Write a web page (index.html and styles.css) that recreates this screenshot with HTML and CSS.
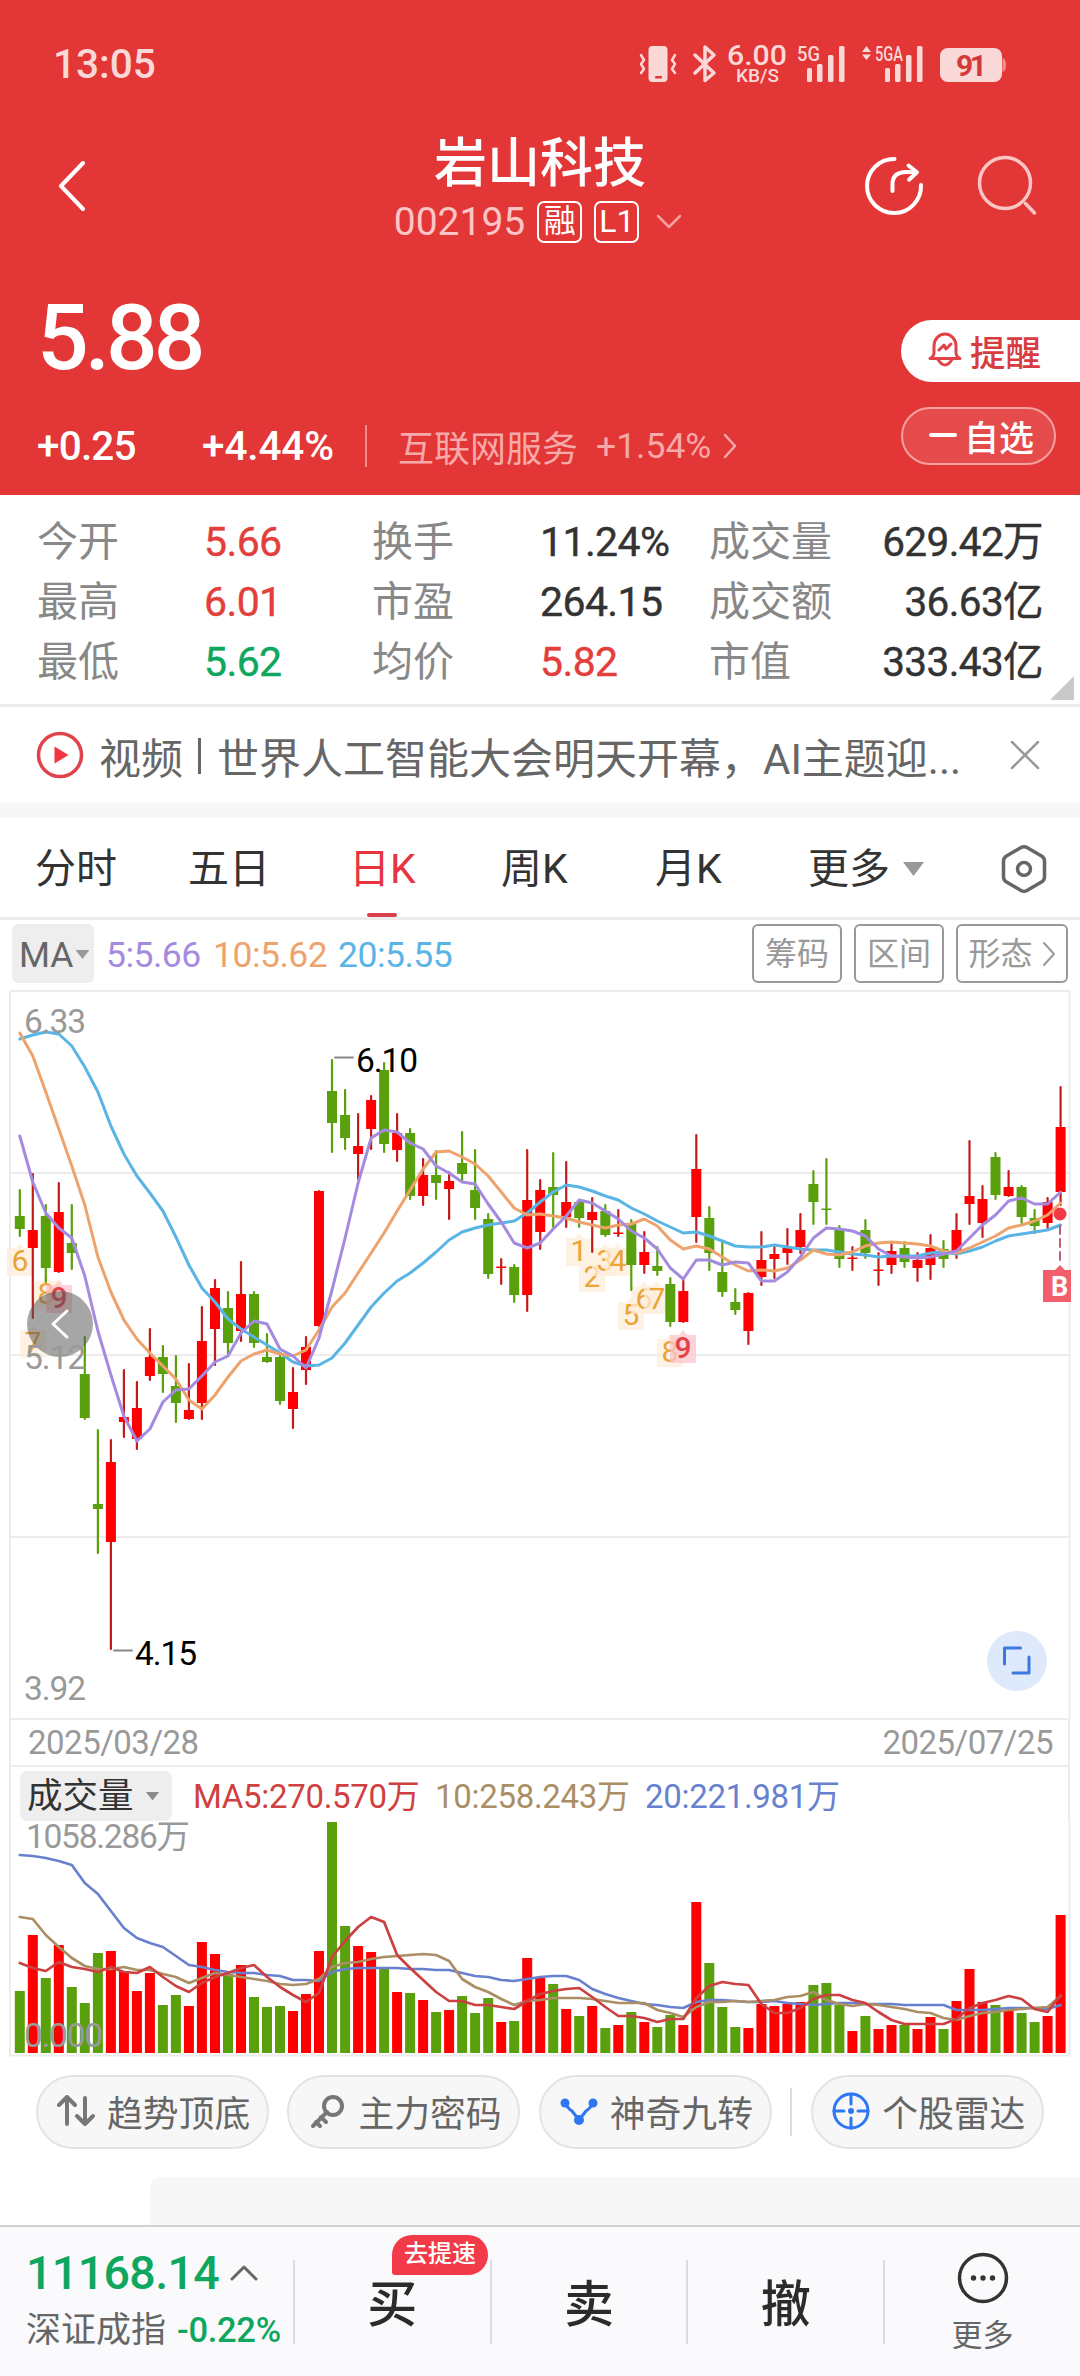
FILE: index.html
```html
<!DOCTYPE html>
<html lang="zh-CN">
<head>
<meta charset="utf-8">
<title>岩山科技 002195</title>
<link rel="stylesheet" href="styles.css">
</head>
<body>
<header class="hero">
  <div class="status">
    <span class="clock">13:05</span>
    <svg class="status-icons" width="380" height="50" viewBox="630 40 380 50">
      <g class="soft-fill">
        <rect x="648.500" y="46" width="19" height="36" rx="4"/>
        <rect x="807" y="68" width="5" height="14" rx="1.500"/><rect x="817" y="64" width="5.500" height="18" rx="1.500"/><rect x="828" y="55" width="5.500" height="27" rx="1.500"/><rect x="839" y="46" width="5.500" height="36" rx="1.500"/>
        <rect x="885" y="68" width="5" height="14" rx="1.500"/><rect x="895" y="64" width="5.500" height="18" rx="1.500"/><rect x="906" y="55" width="5.500" height="27" rx="1.500"/><rect x="917" y="46" width="5.500" height="36" rx="1.500"/>
        <path d="M862 52l4.500-6 4.500 6zM862 54.500h9l-4.500 5.500z"/>
        <rect x="940" y="48" width="62" height="34" rx="8"/>
        <path class="nub" d="M1002.500 58q3.500 1 3.500 7t-3.500 7z"/>
      </g>
      <rect class="red-fill" x="655" y="76" width="7" height="2.500" rx="1"/>
      <path class="soft-line" d="M641 55l3 5-3 4 3 5-3 4M675 55l-3 5 3 4-3 5 3 4" stroke-width="2.500"/>
      <path class="soft-line" d="M695 55l19 18-9 7.500V47l9 8-19 18" stroke-width="3.500"/>
      <text class="st big" x="727" y="65" font-size="28" textLength="60" lengthAdjust="spacingAndGlyphs">6.00</text>
      <text class="st" x="736" y="81.500" font-size="18.500" textLength="43" lengthAdjust="spacingAndGlyphs">KB/S</text>
      <text class="st" x="797" y="61" font-size="20" textLength="23" lengthAdjust="spacingAndGlyphs">5G</text>
      <text class="st" x="875" y="61" font-size="20" textLength="28" lengthAdjust="spacingAndGlyphs">5GA</text>
      <text class="batt" x="956" y="75.500" font-size="30" textLength="31">91</text>
    </svg>
  </div>
  <div class="titlebar">
    <svg class="back" width="30" height="50" viewBox="0 0 30 50"><path d="M26 2L4 25l22 23"/></svg>
    <div class="title">
      <h1>岩山科技</h1>
      <div class="code"><span>002195</span><i class="badge">融</i><i class="badge">L1</i><svg width="26" height="16" viewBox="0 0 26 16"><path d="M2 2l11 11L24 2"/></svg></div>
    </div>
    <svg class="actions" width="180" height="64" viewBox="860 154 180 64">
      <path class="share" d="M894.500 159A27 27 0 1 0 921 185M892.500 191v-7q0-12 14-12h9M908.500 165.500l8.500 6.700-8 7.500"/>
      <g class="search"><circle cx="1005" cy="183" r="25.500"/><path d="M1025.500 203.500l9 9.500"/></g>
    </svg>
  </div>
  <div class="quote">
    <div>
      <div class="price">5.88</div>
      <div class="change"><span class="diff">+0.25</span><span class="pct">+4.44%</span><i class="sep"></i><span class="sector">互联网服务</span><span class="sector-pct">+1.54%</span><svg width="14" height="26" viewBox="0 0 14 26"><path d="M2 2l10 11L2 24"/></svg></div>
    </div>
    <div class="side">
      <div class="remind"><svg width="34" height="36" viewBox="0 0 34 36"><path d="M2 26.500h30q-4-2-4-6V14a11 12 0 0 0-22 0v6.500q0 4-4 6zM10 27.500q7 11 14 0M11 18l5-5 2 4 5-5"/></svg>提醒</div>
      <div class="fav"><i></i>自选</div>
    </div>
  </div>
</header>

<section class="stats">
  <span>今开</span><b class="up">5.66</b><span>换手</span><b>11.24%</b><span>成交量</span><b class="r">629.42万</b>
  <span>最高</span><b class="up">6.01</b><span>市盈</span><b>264.15</b><span>成交额</span><b class="r">36.63亿</b>
  <span>最低</span><b class="down">5.62</b><span>均价</span><b class="up">5.82</b><span>市值</span><b class="r">333.43亿</b>
  <i class="corner"></i>
</section>

<section class="news">
  <svg width="48" height="48" viewBox="0 0 48 48"><circle cx="24" cy="24" r="21.500"/><path d="M18.500 15.500v17l14-8.500z"/></svg>
  <p><span>视频</span><i></i><span>世界人工智能大会明天开幕，AI主题迎...</span></p>
  <svg class="close" width="30" height="30" viewBox="0 0 30 30"><path d="M2 2l26 26M28 2L2 28"/></svg>
</section>

<nav class="tabs">
  <span>分时</span><span>五日</span><span class="on">日K</span><span>周K</span><span>月K</span>
  <span class="more">更多<i class="tri"></i></span>
  <svg width="46" height="50" viewBox="0 0 46 50"><path d="M20 3.500q3-1.700 6 0l14.500 8.500q3 1.700 3 5v16q0 3.300-3 5L26 46.500q-3 1.700-6 0L5.500 38q-3-1.700-3-5V17q0-3.300 3-5z"/><circle cx="23" cy="25" r="6.500"/></svg>
</nav>

<section class="ma-row">
  <span class="ma">MA<i class="tri"></i></span>
  <span class="m5">5:5.66</span><span class="m10">10:5.62</span><span class="m20">20:5.55</span>
  <div class="tools"><span>筹码</span><span>区间</span><span class="wide">形态<svg width="14" height="26" viewBox="0 0 14 26"><path d="M2 2l10 11L2 24"/></svg></span></div>
</section>

<svg id="kline" class="chart" width="1080" height="728" viewBox="0 990 1080 728"></svg>
<div class="dates"><span>2025/03/28</span><span>2025/07/25</span></div>
<div class="vol-row"><span class="vol">成交量<i class="tri"></i></span><span class="v5">MA5:270.570万</span><span class="v10">10:258.243万</span><span class="v20">20:221.981万</span></div>
<svg id="volume" class="chart" width="1080" height="236" viewBox="0 1821 1080 236"></svg>

<section class="pills">
  <span><svg width="38" height="32" viewBox="0 0 38 32"><path class="gl" d="M10 29V3M2 10l8-8 8 8M28 3v26M20 21l8 8 8-8"/></svg>趋势顶底</span>
  <span><svg width="38" height="36" viewBox="0 0 38 36"><circle class="gl" cx="25" cy="13" r="9"/><path class="gl" d="M19 19L5 33M8 29l4 4M13 24l5 5"/></svg>主力密码</span>
  <span><svg width="38" height="32" viewBox="0 0 38 32"><path class="bl" stroke-width="4" d="M5 7q2 6 7 9l7 9 7-9q5-3 7-9"/><g class="bf"><circle cx="5" cy="8" r="4.500"/><circle cx="33" cy="8" r="4.500"/><circle cx="19" cy="25" r="5"/></g></svg>神奇九转</span>
  <i></i>
  <span><svg width="38" height="38" viewBox="0 0 38 38"><circle class="bl" cx="19" cy="19" r="17"/><path class="bl" d="M19 2v10M19 26v10M2 19h10M26 19h10"/><circle class="bf" cx="19" cy="19" r="3"/></svg>个股雷达</span>
</section>
<div class="card"></div>

<footer class="bar">
  <div class="index">
    <div class="val">11168.14<svg width="28" height="18" viewBox="0 0 28 18"><path d="M2 15L14 3l12 12"/></svg></div>
    <div class="name">深证成指<b>-0.22%</b></div>
  </div>
  <div class="act">买<em>去提速</em></div>
  <div class="act">卖</div>
  <div class="act">撤</div>
  <div class="act dots"><svg width="52" height="52" viewBox="0 0 52 52"><circle class="ring" cx="26" cy="26" r="23.500"/><circle cx="16.500" cy="26" r="2.700"/><circle cx="26" cy="26" r="2.700"/><circle cx="35.500" cy="26" r="2.700"/></svg>更多</div>
</footer>
<script src="chart.js"></script>
</body>
</html>
```
FILE: styles.css
```css
* { box-sizing: border-box; }
body { margin: 0; width: 1080px; height: 2376px; overflow: hidden; background: #fff; color: #333; font-family: Roboto, "Noto Sans CJK SC", sans-serif; display: flex; flex-direction: column; }
i, em { font-style: normal; }
svg { flex: none; display: block; fill: none; stroke-linecap: round; stroke-linejoin: round; }
span, p, b, div { white-space: nowrap; }

.hero { flex: none; height: 495px; background: #e33636; color: #fff; }
.status { height: 126px; display: flex; justify-content: space-between; padding: 40px 70px 0 53px; }
.clock { font-size: 40.500px; font-weight: 500; line-height: 48px; color: #fbd8d8; }
.soft-fill { fill: #fbd8d8; }
.nub { fill: #ef8f8f; }
.red-fill { fill: #e33636; }
.soft-line { stroke: #fbd8d8; }
.st { fill: #fbd8d8; font-weight: 500; }
.batt { fill: #d23a3a; font-weight: 700; }
.titlebar { height: 130px; display: flex; padding-left: 57px; }
.back { margin-top: 35px; stroke: #fff; stroke-width: 4; }
.title { width: 560px; margin-left: 173px; display: flex; flex-direction: column; align-items: center; }
h1 { margin: 2px 0 0; font-size: 53px; font-weight: 500; line-height: 72px; }
.code { display: flex; align-items: center; height: 42px; margin: 1px 4px 0 0; font-size: 39px; color: #fbc5c5; }
.code span { letter-spacing: 0; margin-right: 12px; }
.badge { width: 45px; height: 42px; border: 2.500px solid #fff; border-radius: 7px; color: #fff; font-size: 32px; line-height: 37px; text-align: center; margin-right: 12px; }
.code svg { stroke: #f4a0a0; stroke-width: 2.500; margin-left: 5px; }
.actions { margin: 28px 0 0 40px; }
.share { stroke: #fff; stroke-width: 4; }
.search { stroke: #fbc5c5; stroke-width: 3.500; }
.quote { display: flex; justify-content: space-between; padding-left: 37px; }
.price { margin-top: 32px; font-size: 91px; font-weight: 500; line-height: 100px; letter-spacing: -4px; }
.change { display: flex; align-items: center; height: 44px; margin-top: 36px; font-size: 40.500px; font-weight: 500; }
.diff { width: 165px; letter-spacing: -.8px; }
.pct { width: 163px; letter-spacing: -.1px; }
.sep { width: 2px; height: 42px; background: #ee8a8a; }
.sector { margin-left: 31px; font-size: 36px; font-weight: 400; color: #f6a9a9; }
.sector-pct { margin-left: 18px; width: 127px; font-size: 35.500px; font-weight: 400; color: #f6a9a9; }
.change svg { stroke: #f6a9a9; stroke-width: 2.500; }
.side { width: 179px; padding-top: 64px; }
.remind { height: 62px; border-radius: 31px 0 0 31px; background: #fff; color: #d83c3f; display: flex; align-items: center; padding: 0 0 2px 27px; gap: 8px; font-size: 35.500px; font-weight: 500; }
.remind svg { stroke: #e04347; stroke-width: 3; }
.fav { width: 155px; height: 58px; margin-top: 25px; border: 2px solid #f4a0a0; border-radius: 29px; background: #e64b4b; display: flex; align-items: center; padding: 0 0 2px 26px; gap: 7px; font-size: 35px; font-weight: 500; }
.fav i { width: 28px; height: 3.500px; background: #fff; border-radius: 2px; }

.stats { flex: none; position: relative; height: 212px; padding: 17px 37px 0 37px; border-bottom: 3px solid #ececec; display: grid; grid-template-columns: 167px 168px 168px 169px 140px 1fr; grid-auto-rows: 60px; align-items: center; font-size: 41px; line-height: 60px; color: #888; }
.stats b { font-weight: 400; letter-spacing: -.6px; color: #333; -webkit-text-stroke: .4px currentColor; }
.stats .up { color: #e23f3c; }
.stats .down { color: #0fa65f; }
.stats .r { text-align: right; font-size: 40.500px; }
.corner { position: absolute; right: 6px; bottom: 4px; width: 24px; height: 24px; background: #c9c9c9; clip-path: polygon(100% 0, 100% 100%, 0 100%); }

.news { flex: none; height: 111px; border-bottom: 15px solid #f7f7f7; display: flex; align-items: center; padding: 0 40px 0 36px; color: #666; font-size: 42px; }
.news p { margin: 1px 0 0 15px; display: flex; align-items: center; width: 911px; }
.news p i { width: 3px; height: 36px; background: #666; margin: 0 16px 0 15px; }
.news circle { stroke: #e0434c; stroke-width: 3.500; }
.news svg:first-child path { fill: #f03440; }
.news .close { stroke: #999; stroke-width: 2.500; }

.tabs { flex: none; height: 102px; border-bottom: 3px solid #ececec; display: grid; grid-template-columns: 153px 161px 152px 154px 153px 193px 1fr; align-items: center; padding: 3px 0 0 35px; font-size: 41px; line-height: 96px; color: #333; }
.tabs .on { color: #e8343f; position: relative; }
.on::after { content: ""; position: absolute; left: 18px; bottom: 0; width: 30px; height: 4px; border-radius: 2px; background: #d8404a; }
.tri { display: inline-block; background: #999; clip-path: polygon(0 0, 100% 0, 50% 100%); }
.more { display: flex; align-items: center; gap: 13px; }
.more .tri { width: 21px; height: 14px; }
.tabs svg { stroke: #666; stroke-width: 3.500; }

.ma-row { flex: none; height: 70px; padding: 0 12px; display: flex; align-items: center; font-size: 35.500px; line-height: 56px; padding-bottom: 3px; }
.ma { width: 82px; height: 59px; border-radius: 6px; background: #eee; color: #666; display: flex; align-items: center; padding: 2px 0 0 7px; margin-right: 12px; }
.ma .tri { width: 14px; height: 9px; margin-left: 2px; }
.m5, .m10, .m20 { letter-spacing: -.5px; padding-top: 2px; }
.m5 { width: 107px; color: #a48be0; }
.m10 { width: 125px; color: #eda36b; }
.m20 { color: #5ab4e5; }
.tools { margin-left: auto; display: flex; gap: 12px; font-size: 32px; color: #999; }
.tools span { width: 90px; height: 59px; border: 2px solid #999; border-radius: 6px; display: flex; align-items: center; justify-content: center; }
.tools .wide { width: 112px; gap: 9px; }
.tools svg { stroke: #999; stroke-width: 2; }

.chart { overflow: visible; }
.dates, .vol-row { flex: none; width: 1061px; margin-left: 9px; border: solid #ececec; border-width: 2px; border-bottom: 0; display: flex; align-items: center; }
.dates { height: 47px; justify-content: space-between; padding: 0 15px 0 17px; font-size: 33px; color: #999; letter-spacing: -.5px; }
.vol-row { height: 56px; padding: 4px 0 0 9px; font-size: 33px; line-height: 50px; }
.vol { width: 152px; height: 50px; border-radius: 7px; background: #eee; font-size: 35.500px; padding-left: 7px; display: flex; align-items: center; margin-right: 21px; }
.vol .tri { width: 14px; height: 9px; margin-left: 12px; background: #8a8a8a; }
.v5, .v10, .v20 { letter-spacing: -.3px; padding-top: 1px; }
.v5 { width: 242px; color: #cf4040; }
.v10 { width: 210px; color: #ab8e64; }
.v20 { color: #6881cf; }

.pills { flex: none; height: 92px; padding: 18px 36px 0; display: flex; align-items: flex-start; }
.pills span { width: 233px; height: 74px; margin-right: 18.500px; border: 2px solid #e3e3e3; border-radius: 37px; background: #f7f7f7; color: #666; font-size: 35.800px; display: flex; align-items: center; padding: 0 0 2px 19px; gap: 12px; }
.pills > i { width: 2px; height: 48px; margin: 13px 19px 0 0; background: #ddd; }
.pills span:last-child { margin: 0; }
.gl { stroke: #777; stroke-width: 4; }
.bl { stroke: #2f77f2; stroke-width: 3; }
.bf { fill: #2f77f2; }
.card { flex: none; margin: 28px 0 0 150px; height: 48px; border-radius: 10px 0 0 0; background: #f7f7f7; }

.bar { flex: none; height: 151px; border-top: 2px solid #d2d2d4; background: #fafafc; display: flex; padding-top: 33px; }
.index { width: 294px; padding-left: 26px; }
.val { height: 56px; margin-top: -15px; display: flex; align-items: center; gap: 11px; font-size: 46.500px; font-weight: 500; line-height: 56px; letter-spacing: -.6px; color: #0fa65f; }
.val svg { stroke: #666; stroke-width: 3; }
.name { margin-top: 4px; font-size: 35px; line-height: 50px; color: #666; }
.name b { font-weight: 500; font-size: 34.500px; letter-spacing: -.3px; color: #0fa65f; margin-left: 11px; }
.act { position: relative; width: 197.500px; height: 84px; border-left: 2px solid #dcdce0; font-size: 50px; font-weight: 500; line-height: 90px; text-align: center; color: #2b2b2b; }
.act em { position: absolute; left: 97px; top: -25px; width: 96px; height: 40px; border-radius: 20px 20px 20px 3px; background: #f23a48; color: #fff; font-size: 24px; line-height: 38px; }
.dots { font-size: 31px; font-weight: 400; line-height: 40px; color: #666; }
.dots svg { margin: -8px auto 12px; fill: #333; }
.dots .ring { fill: none; stroke: #333; stroke-width: 3.500; }

.axis { fill: #999; font-size: 33.500px; }
.mark { fill: #000; font-size: 33.500px; }
.grid { stroke: #ececec; stroke-width: 2; }
.sig { fill: #eaa437; font-size: 30px; text-anchor: middle; }
.sig.nine { fill: #e0434c; font-weight: 500; }
```
FILE: chart.js
```javascript
const X0 = 19.8, STEP = 13.01, UP = '#fe0000', DOWN = '#5aa00c';
const x = i => X0 + i * STEP;

// Each candle: direction, high, body top, body bottom, low, volume top
const candles = `G 1190 1216 1229 1236 1991|R 1174 1230 1248 1318 1935|G 1205 1216 1268 1282 1978|R 1183 1212 1272 1272 1945|G 1205 1243 1253 1269 1987|G 1337 1374 1418 1419 2003|G 1430 1504 1509 1553 1953|R 1440 1462 1542 1649 1951|R 1370 1417 1422 1437 1971|R 1382 1408 1439 1449 1991|R 1329 1357 1376 1380 1973|G 1346 1357 1374 1392 2005|G 1356 1386 1403 1422 1995|R 1364 1410 1419 1419 2006|R 1307 1341 1403 1419 1942|R 1280 1288 1329 1365 1954|G 1292 1308 1343 1354 1974|R 1262 1294 1331 1341 1965|G 1292 1294 1343 1347 1997|G 1334 1357 1362 1362 2007|G 1356 1357 1401 1404 2006|R 1368 1392 1409 1428 2011|R 1337 1347 1370 1384 1994|R 1191 1191 1326 1326 1951|G 1060 1091 1123 1152 1822|G 1090 1115 1138 1149 1926|R 1114 1146 1154 1179 1946|R 1096 1100 1129 1149 1952|G 1063 1070 1144 1152 1969|R 1114 1133 1150 1161 1992|G 1129 1133 1196 1199 1993|R 1159 1175 1196 1205 2000|G 1151 1175 1183 1199 2012|R 1172 1181 1189 1219 2010|G 1132 1163 1174 1181 1996|G 1150 1190 1208 1219 2013|G 1214 1219 1274 1278 1998|R 1259 1266.500 1268 1284 2022|G 1265 1267 1295 1302 2021|R 1150 1200 1295 1311 1958|R 1180 1190 1232 1249 1978|G 1153 1187 1195 1227 1984|R 1162 1202 1217 1227 2009|G 1201 1202 1218 1227 2016|R 1198 1212 1220 1252 2006|G 1205 1211 1235 1236 2028|R 1210 1232.500 1234 1236 2025|G 1220 1223 1265 1290 2012|R 1232 1252 1265 1273 2022|G 1247 1266 1271 1275 2027|G 1278 1284 1322 1326 2015|R 1279 1291 1322 1322 2025|R 1135 1169 1217 1242 1902|G 1207 1218 1253 1270 1963|G 1241 1272 1292 1296 2007|G 1289 1302 1310 1314 2027|R 1293 1293 1331 1344 2028|R 1232 1260 1277 1285 2004|R 1247 1254 1259 1278 2006|R 1229 1248 1253 1264 2004|R 1214 1230 1247 1253 2002|G 1171 1184 1202 1224 1985|G 1159 1208.500 1210 1224 1983|G 1226 1230 1259 1267 2005|R 1247 1257.500 1259 1270 2031|G 1220 1230 1253 1258 2016|R 1253 1269.500 1271 1285 2029|R 1244 1251 1265 1273 2025|G 1242 1248 1262 1267 2025|R 1253 1260 1268 1281 2029|R 1235 1248 1265 1279 2017|G 1241 1249 1259 1267 2029|R 1214 1230 1251 1258 2001|R 1141 1196 1204 1224 1969|R 1186 1199 1223 1237 2002|G 1153 1157 1195 1199 2005|R 1171 1187 1196 1196 2011|G 1186 1187 1217 1223 2013|G 1210 1218 1226 1233 2022|R 1198 1202 1223 1228 2016|R 1087 1127 1192 1205 1915`
  .split('|').map(s => { const [d, ...n] = s.split(' '); return [d === 'R' ? UP : DOWN, ...n.map(Number)]; });

const priceMA = {
  '#5ab4e5': [1039,1035,1032,1034,1046,1067,1092,1126,1154,1176,1193,1211,1237,1265,1288,1302,1319,1329,1337,1345,1353,1362,1366,1365,1358,1343,1325,1307,1293,1281,1273,1263,1252,1240,1232,1228,1225,1223,1221,1213,1202,1192,1185,1187,1191,1196,1200,1208,1214,1221,1227,1233,1232,1236,1241,1246,1247,1247,1245,1247,1249,1250,1250,1252,1254,1255,1257,1256,1256,1256,1253,1252,1254,1251,1247,1241,1236,1234,1232,1230,1225],
  '#eda36b': [1033,1056,1092,1129,1166,1205,1257,1292,1320,1339,1353,1366,1379,1400,1409,1395,1377,1361,1354,1350,1354,1356,1350,1330,1307,1293,1273,1253,1233,1211,1190,1169,1152,1151,1157,1164,1176,1192,1208,1215,1214,1216,1218,1222,1225,1228,1225,1224,1219,1226,1240,1249,1246,1249,1257,1265,1271,1270,1271,1268,1260,1250,1254,1255,1252,1246,1243,1242,1243,1244,1246,1251,1253,1248,1242,1236,1228,1225,1221,1215,1203],
  '#a48be0': [1136,1182,1213,1228,1238,1276,1331,1375,1416,1441,1429,1402,1390,1389,1376,1362,1356,1333,1321,1324,1349,1356,1368,1338,1290,1238,1183,1138,1130,1132,1143,1149,1166,1173,1182,1184,1204,1222,1243,1248,1243,1229,1216,1200,1203,1211,1219,1231,1238,1249,1268,1279,1260,1260,1265,1262,1263,1281,1281,1272,1257,1238,1228,1229,1231,1236,1249,1256,1257,1258,1257,1254,1251,1238,1225,1215,1201,1198,1204,1204,1192]
};
const volMA = {
  '#6881cf': [1855,1856,1858,1861,1865,1883,1894,1911,1928,1938,1943,1947,1956,1965,1967,1970,1972,1973,1973,1975,1976,1980,1980,1981,1972,1969,1968,1968,1968,1968,1969,1969,1970,1970,1973,1976,1977,1980,1981,1979,1977,1976,1976,1980,1989,1994,1998,2001,2004,2005,2007,2008,2002,2000,2000,2001,2002,2002,2001,2003,2004,2005,2004,2003,2003,2004,2004,2004,2005,2005,2005,2005,2010,2010,2010,2009,2008,2008,2008,2009,2005],
  '#ab8e64': [1917,1919,1935,1947,1958,1966,1969,1969,1967,1970,1970,1974,1977,1983,1978,1973,1975,1977,1979,1981,1984,1985,1984,1979,1967,1963,1962,1959,1957,1956,1955,1954,1955,1961,1979,1987,1992,1999,2005,2001,2000,1998,1998,1998,1999,2001,2003,2003,2003,2010,2013,2017,2007,2002,2002,2001,2002,2001,2000,1997,1996,1992,2000,2004,2006,2004,2005,2007,2009,2012,2013,2018,2020,2016,2013,2012,2010,2009,2008,2007,1996],
  '#cb4040': [1963,1968,1971,1962,1967,1969,1972,1967,1972,1973,1967,1977,1986,1992,1983,1977,1973,1968,1965,1977,1987,1995,2002,1993,1957,1941,1927,1917,1922,1955,1968,1980,1992,2001,2001,2005,2005,2007,2009,2001,1994,1991,1989,1988,1997,2007,2016,2016,2018,2022,2019,2019,1998,1986,1982,1984,1985,2004,2013,2013,2008,1999,1995,1995,2000,2003,2012,2020,2024,2024,2024,2024,2019,2008,2003,2000,1996,1999,2009,2012,1995]
};
const lines = (set, w) => Object.entries(set).map(([c, ys]) =>
  `<polyline stroke="${c}" stroke-width="${w}" points="${ys.map((y, i) => x(i).toFixed(1) + ',' + y).join(' ')}"/>`).join('');

// Nine-turn counters: x centre, tag top, digit
const tag = ([cx, top, d]) => `<path d="M${cx - 13} ${top + 4}h9l4-5 4 5h9v28h-26z" fill="${d === 9 ? '#fbc4c8' : '#fdeedb'}" fill-opacity=".75"/>
  <text class="sig${d === 9 ? ' nine' : ''}" x="${cx}" y="${top + 27}">${d}</text>`;
const early = [[20, 1244, 6], [46, 1277, 8], [33, 1326, 7], [59, 1281, 9]].map(tag).join('');
const late = [[579, 1234, 1], [592, 1260, 2], [605, 1244, 3], [618, 1244, 4], [631, 1298, 5], [644, 1282, 6], [657, 1282, 7], [670, 1335, 8], [683, 1331, 9]].map(tag).join('');

document.getElementById('kline').innerHTML = `
  <path class="grid" d="M10 1719V991H1069.500V1719M10 1173H1069M10 1355H1069M10 1537H1069"/>
  ${early}${late}
  ${candles.map(([c, h, t, b, l], i) => `<path d="M${x(i).toFixed(1)} ${h}V${l}" stroke="${c === UP ? '#c41a1a' : c}" stroke-width="2.200"/><rect x="${(x(i) - 5).toFixed(1)}" y="${t}" width="10" height="${b - t}" fill="${c}"/>`).join('')}
  ${lines(priceMA, 3)}
  <path d="M335 1057.500h18M114 1650.500h18" stroke="#888" stroke-width="1.800"/>
  <text class="mark" x="356" y="1072" textLength="62">6.10</text>
  <text class="mark" x="135" y="1665" textLength="62">4.15</text>
  <circle cx="60" cy="1324" r="33" fill="#555" fill-opacity=".52"/>
  <path d="M67 1311l-14 13 14 13" stroke="#fff" stroke-width="3"/>
  <text class="axis" x="24" y="1033" textLength="62">6.33</text>
  <text class="axis" x="24" y="1369" textLength="62">5.12</text>
  <text class="axis" x="24" y="1700" textLength="62">3.92</text>
  <circle cx="1060" cy="1214" r="6.500" fill="#f03a48"/>
  <path d="M1060 1226v34" stroke="#c0606c" stroke-width="2" stroke-dasharray="8 5"/>
  <path d="M1043 1270h12l5-5 5 5h6v32h-28z" fill="#f25f6b"/>
  <text x="1051" y="1296" fill="#fff" font-size="27" font-weight="700">B</text>
  <circle cx="1017" cy="1661" r="30" fill="#dfe9fc"/>
  <path d="M1004.500 1664v-16h16M1029 1657v16h-16" stroke="#3a78e0" stroke-width="3"/>`;

document.getElementById('volume').innerHTML = `
  <path class="grid" d="M10 1821V2055.500H1069.500V1821"/>
  <text class="axis" x="26" y="1848" textLength="164">1058.286万</text>
  ${candles.map((c, i) => `<rect x="${(x(i) - 5).toFixed(1)}" y="${c[5]}" width="10" height="${2053 - c[5]}" fill="${c[0]}"/>`).join('')}
  ${lines(volMA, 2.7)}
  <text class="axis" x="24" y="2047" textLength="79">0.000</text>`;
```
